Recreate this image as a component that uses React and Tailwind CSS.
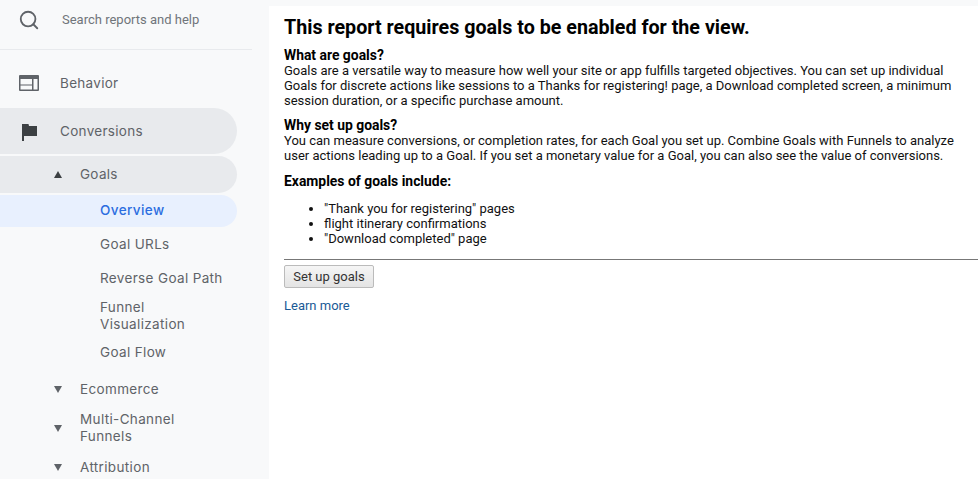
import React from 'react';
import { Search } from 'lucide-react';

const sans = "font-['Inter',sans-serif]";

function SubItem({ label, className = '' }) {
    return (
        <div className={`w-[225px] pl-[100px] text-[13.5px] leading-[17px] tracking-[0.35px] text-[#5f6368] ${className}`}>
            {label}
        </div>
    );
}

function Caret({ up, className = '' }) {
    return (
        <svg width="8" height="7" viewBox="0 0 8 7" className={className}>
            <path d={up ? 'M4 0 L8 7 L0 7 Z' : 'M0 0 L8 0 L4 7 Z'} fill={up ? '#3c4043' : '#5f6368'} />
        </svg>
    );
}

function Section({ label, className = '' }) {
    return (
        <div className={`flex items-center pl-[54px] text-[13.5px] leading-[17px] tracking-[0.35px] text-[#5f6368] ${className}`}>
            <Caret className="w-2 shrink-0" />
            <span className="ml-[18px] w-[110px]">{label}</span>
        </div>
    );
}

export default function App() {
    return (
        <div className="flex h-[479px] w-[978px] overflow-hidden bg-[#f8f9fa]">
            <aside className={`w-[269px] shrink-0 ${sans}`}>
                <div className="flex h-[50px] w-[252px] items-center border-b border-[#e8eaed] pb-[10px] pl-[18px]">
                    <Search size={22} strokeWidth={2} className="text-[#5f6368]" />
                    <span className="ml-[22px] font-['Roboto',sans-serif] text-[13px] text-[#70757a]">Search reports and help</span>
                </div>

                <div className="mt-[14px] flex h-[38px] items-center pl-[19px] text-[13.5px] tracking-[0.3px] text-[#5f6368]">
                    <svg width="20" height="16" viewBox="0 0 20 16">
                        <path d="M1 0h18a1 1 0 0 1 1 1v14a1 1 0 0 1-1 1H1a1 1 0 0 1-1-1V1a1 1 0 0 1 1-1ZM1.500 4v5.500H13V4Zm0 6.500v4H13v-4ZM14.500 4v10.500h4V4Z" fill="#5f6368" fillRule="evenodd" />
                    </svg>
                    <span className="ml-[21px]">Behavior</span>
                </div>

                <div className="mt-[6px] flex h-[46px] w-[237px] items-center rounded-r-[23px] bg-[#e8eaed] pl-[22px] text-[13.5px] tracking-[0.3px] text-[#5f6368]">
                    <svg width="15" height="17" viewBox="0 0 15 17" className="mt-[2px]">
                        <path d="M0 0h6.500l.5 2h8v10H2v5H0Z" fill="#3c4043" />
                    </svg>
                    <span className="ml-[23px]">Conversions</span>
                </div>

                <div className="mt-[2px] flex h-[37px] w-[237px] items-center rounded-r-[19px] bg-[#e8eaed] pl-[54px] text-[13.5px] tracking-[0.3px] text-[#5f6368]">
                    <Caret up />
                    <span className="ml-[18px]">Goals</span>
                </div>

                <div className="mt-[2px] flex h-[32px] w-[237px] items-center rounded-r-[16px] bg-[#e8f0fe] pb-[2px] pl-[100px] text-[13.5px] font-medium tracking-[0.4px] text-[#2b6de0]">
                    Overview
                </div>

                <SubItem label="Goal URLs" className="mt-[9px]" />
                <SubItem label="Reverse Goal Path" className="mt-[17px]" />
                <SubItem label="Funnel Visualization" className="mt-[12px]" />
                <SubItem label="Goal Flow" className="mt-[11px]" />

                <Section label="Ecommerce" className="mt-[20px]" />
                <Section label="Multi-Channel Funnels" className="mt-[13px]" />
                <Section label="Attribution" className="mt-[14px]" />
            </aside>

            <main className="mt-[6px] flex-1 bg-white pl-[15px] pt-[10px] font-['Roboto',sans-serif] text-[13px] leading-[15px] text-[#111]">
                <h1 className="text-[19.7px] font-bold leading-[24px] text-black">This report requires goals to be enabled for the view.</h1>
                <h2 className="mt-[7px] text-[13.9px] font-bold leading-[16px] text-black">What are goals?</h2>
                <p className="w-[680px]">Goals are a versatile way to measure how well your site or app fulfills targeted objectives. You can set up individual Goals for discrete actions like sessions to a Thanks for registering! page, a Download completed screen, a minimum session duration, or a specific purchase amount.</p>
                <h2 className="mt-[9px] text-[13.9px] font-bold leading-[16px] text-black">Why set up goals?</h2>
                <p className="w-[680px]">You can measure conversions, or completion rates, for each Goal you set up. Combine Goals with Funnels to analyze user actions leading up to a Goal. If you set a monetary value for a Goal, you can also see the value of conversions.</p>
                <h2 className="mt-[10px] text-[13.9px] font-bold leading-[16px] text-black">Examples of goals include:</h2>
                <ul className="mt-[12px] list-disc pl-[40px]">
                    <li>"Thank you for registering" pages</li>
                    <li>flight itinerary confirmations</li>
                    <li>"Download completed" page</li>
                </ul>
                <hr className="mt-[13px] border-t border-[#777]" />
                <button className="mt-[5px] block h-[23px] w-[90px] rounded-[2px] border border-[#bbb] bg-gradient-to-b from-[#f5f5f5] to-[#e4e4e4] text-[13px] text-[#333]">Set up goals</button>
                <a className="mt-[10px] block text-[#1a5a96]">Learn more</a>
            </main>
        </div>
    );
}
